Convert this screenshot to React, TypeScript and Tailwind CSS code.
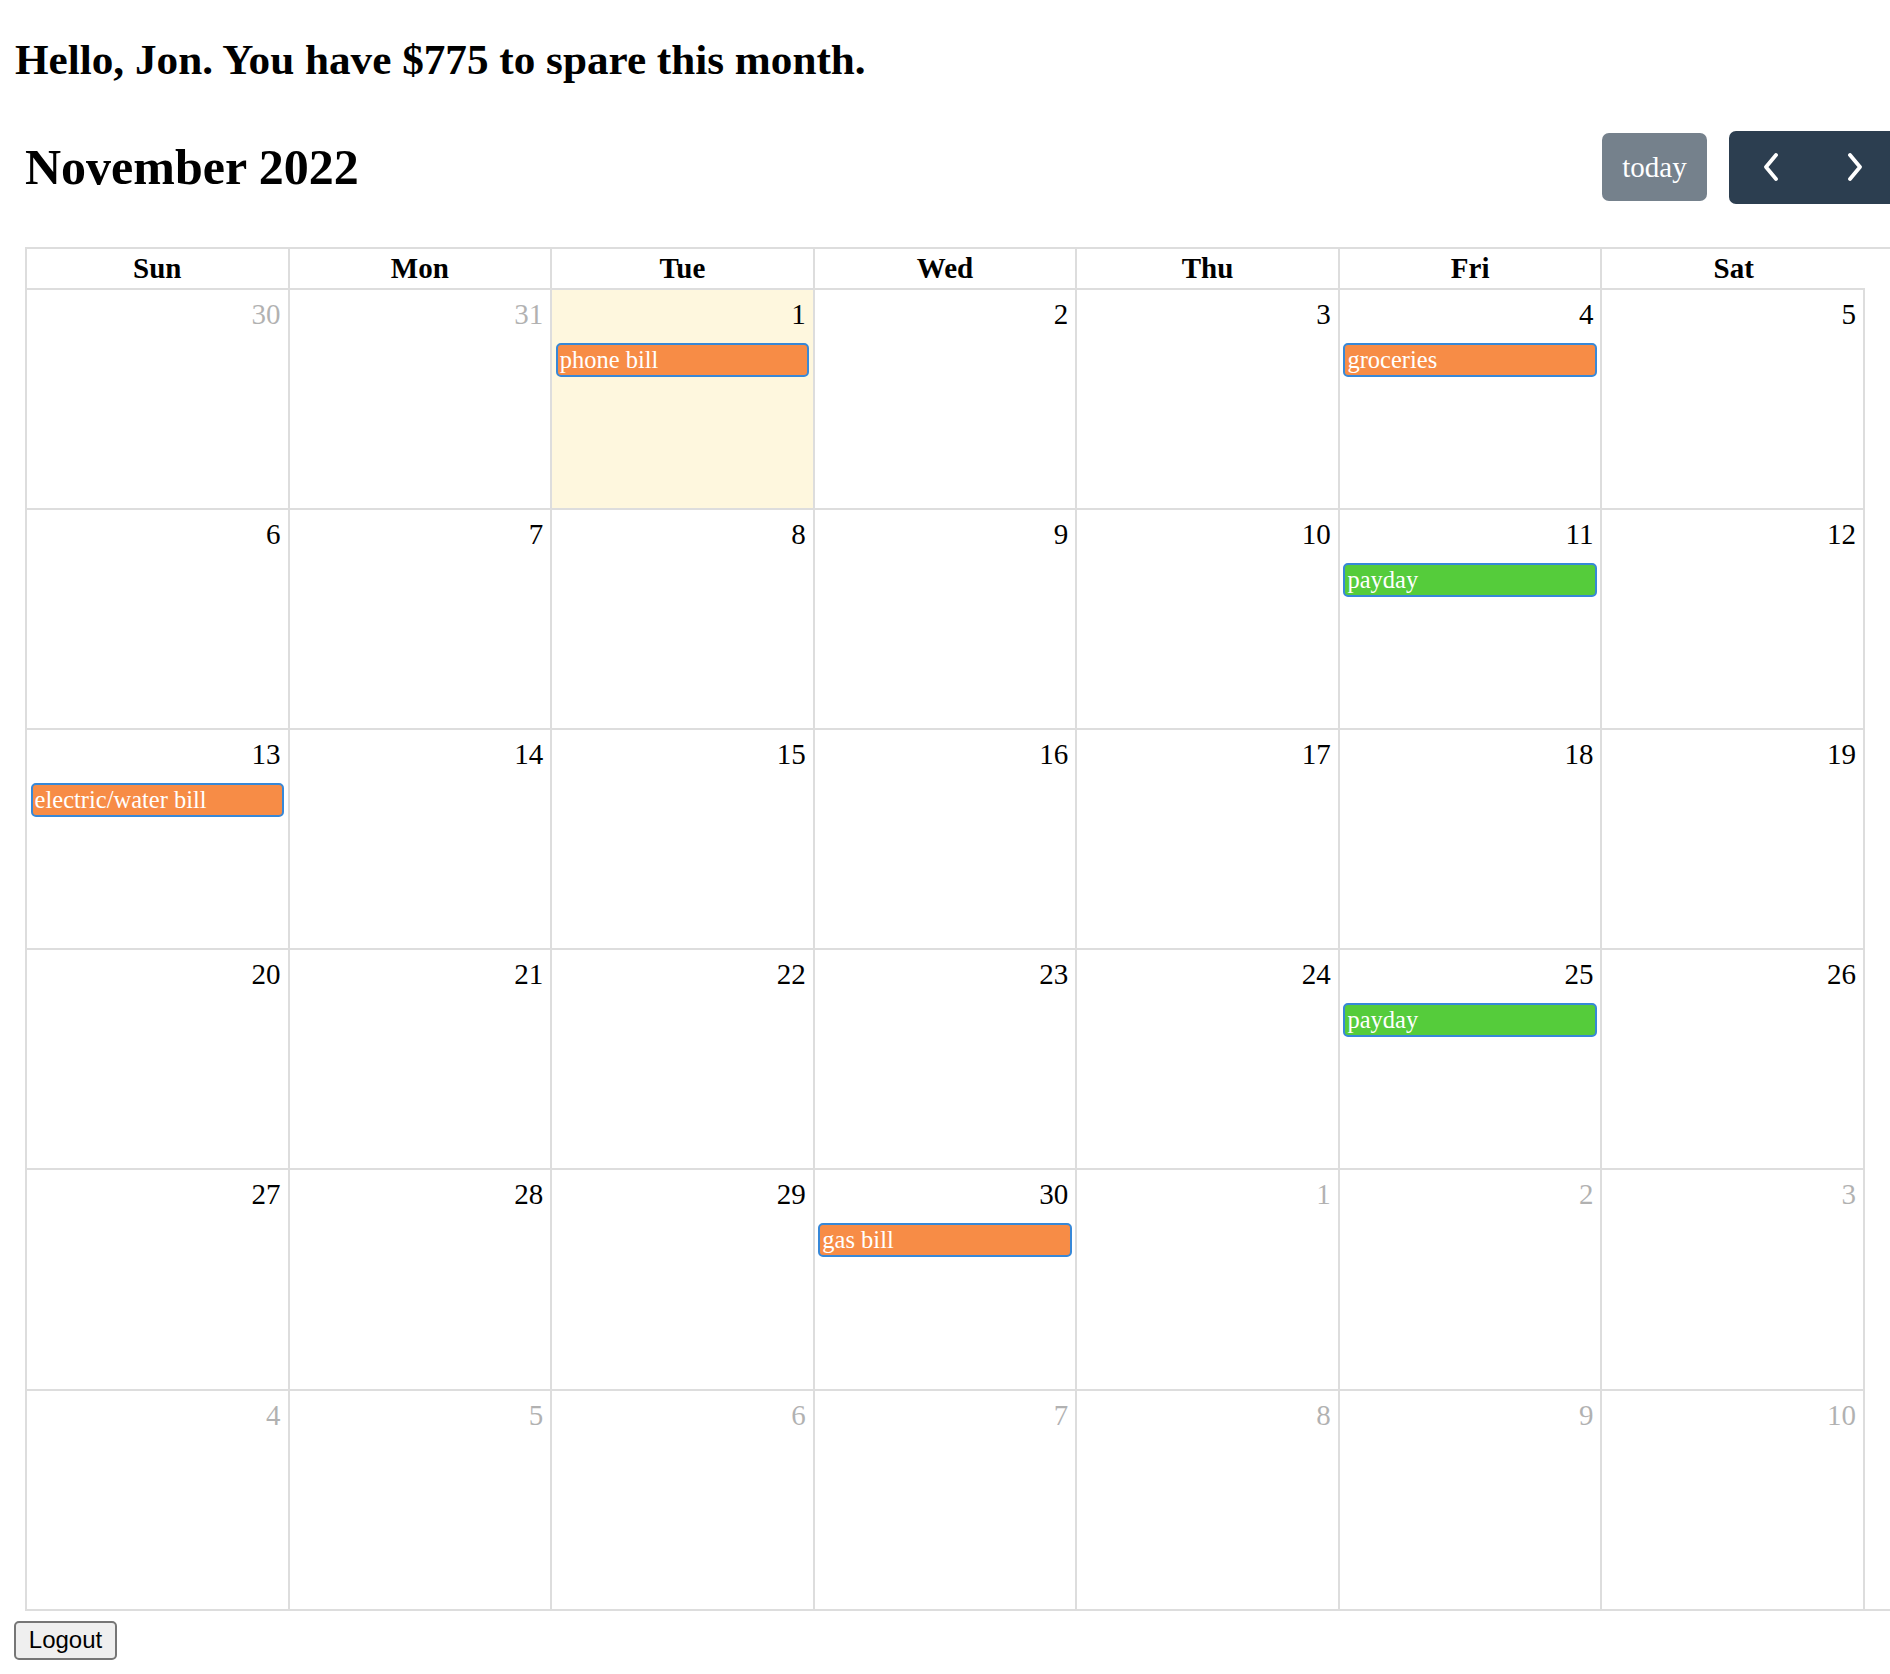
import React from 'react';

type CalEvent = { title: string; color: 'orange' | 'green' };

type Day = { n: number; other?: boolean; today?: boolean; events?: CalEvent[] };

const DAY_NAMES = ['Sun', 'Mon', 'Tue', 'Wed', 'Thu', 'Fri', 'Sat'];

const EVENTS: Record<number, CalEvent[]> = {
  1: [{ title: 'phone bill', color: 'orange' }],
  4: [{ title: 'groceries', color: 'orange' }],
  11: [{ title: 'payday', color: 'green' }],
  13: [{ title: 'electric/water bill', color: 'orange' }],
  25: [{ title: 'payday', color: 'green' }],
  30: [{ title: 'gas bill', color: 'orange' }],
};

// November 2022 starts on a Tuesday
const buildWeeks = (): Day[][] => {
  const days: Day[] = [{ n: 30, other: true }, { n: 31, other: true }];
  for (let d = 1; d <= 30; d++) {
    days.push({ n: d, today: d === 1, events: EVENTS[d] });
  }
  let next = 1;
  while (days.length < 42) days.push({ n: next++, other: true });
  const weeks: Day[][] = [];
  for (let i = 0; i < 6; i++) weeks.push(days.slice(i * 7, i * 7 + 7));
  return weeks;
};

const Chevron: React.FC<{ dir: 'left' | 'right' }> = ({ dir }) => (
  <svg width="16" height="28" viewBox="0 0 16 28" fill="none">
    <polyline
      points={dir === 'left' ? '13,2 3,14 13,26' : '3,2 13,14 3,26'}
      stroke="white"
      strokeWidth="3.8"
      strokeLinecap="round"
      strokeLinejoin="round"
    />
  </svg>
);

const EventChip: React.FC<{ ev: CalEvent }> = ({ ev }) => (
  <div
    className={`mx-[3.6px] h-[34px] rounded-[5px] border-2 border-[#3788d8] pl-[2px] text-[24.5px] leading-[29px] text-white whitespace-nowrap overflow-hidden ${
      ev.color === 'orange' ? 'bg-[#f78c46]' : 'bg-[#55cc3b]'
    }`}
  >
    {ev.title}
  </div>
);

const App: React.FC = () => {
  const weeks = buildWeeks();

  return (
    <div className="w-[1890px] overflow-hidden bg-white text-black font-['Liberation_Serif','Times_New_Roman',serif]">
      <h1 className="pl-[15px] pt-[35px] text-[43.2px] font-bold leading-[50.6px]">
        Hello, Jon. You have $775 to spare this month.
      </h1>

      <div className="ml-[25px] w-[1872px] mt-[45px]">
        {/* Toolbar */}
        <div className="flex items-center justify-between h-[73px]">
          <h2 className="text-[50px] font-bold leading-[58px]">November 2022</h2>
          <div className="flex items-center gap-[22px]">
            <button className="w-[105px] h-[68px] rounded-[7px] bg-[#2c3e50] opacity-65 text-white text-[29px] leading-none pt-[1px]">
              today
            </button>
            <div className="flex h-[73px] rounded-[7px] bg-[#2c3e50] overflow-hidden">
              <button aria-label="prev" className="w-[84px] flex items-center justify-center">
                <Chevron dir="left" />
              </button>
              <button aria-label="next" className="w-[84px] flex items-center justify-center">
                <Chevron dir="right" />
              </button>
            </div>
          </div>
        </div>

        {/* Grid */}
        <div className="mt-[43px] border-t-2 border-b-2 border-[#ddd]">
          <div className="flex">
            <div className="grid grid-cols-7 w-[1840px] border-l-2 border-b-2 border-[#ddd]">
              {DAY_NAMES.map((d, i) => (
                <div
                  key={d}
                  className={`h-[39px] flex items-center justify-center text-[29px] font-bold leading-[33px] border-[#ddd] ${
                    i < 6 ? 'border-r-2' : ''
                  }`}
                >
                  {d}
                </div>
              ))}
            </div>
          </div>

          <div className="w-[1840px] border-l-2 border-[#ddd]">
            {weeks.map((week, wi) => (
              <div key={wi} className={`grid grid-cols-7 ${wi < 5 ? 'h-[220.2px]' : 'h-[218.4px]'}`}>
                {week.map((day, di) => (
                  <div
                    key={di}
                    className={`border-r-2 border-[#ddd] ${wi < 5 ? 'border-b-2' : ''} ${
                      day.today ? 'bg-[#fef7de]' : ''
                    }`}
                  >
                    <div
                      className={`pt-[8px] pr-[7px] text-right text-[29px] leading-[33px] ${
                        day.other ? 'opacity-30' : ''
                      }`}
                    >
                      {day.n}
                    </div>
                    <div className="mt-[12px] flex flex-col gap-[2px]">
                      {day.events?.map((ev, ei) => (
                        <EventChip key={ei} ev={ev} />
                      ))}
                    </div>
                  </div>
                ))}
              </div>
            ))}
          </div>
        </div>
      </div>

      <div className="pl-[14px] pt-[10px] pb-[14px]">
        <button className="h-[39px] w-[103px] rounded-[5px] border-2 border-[#767676] bg-[#efefef] text-[24px] leading-none text-black font-['Liberation_Sans',Arial,sans-serif]">
          Logout
        </button>
      </div>
    </div>
  );
};

export default App;
